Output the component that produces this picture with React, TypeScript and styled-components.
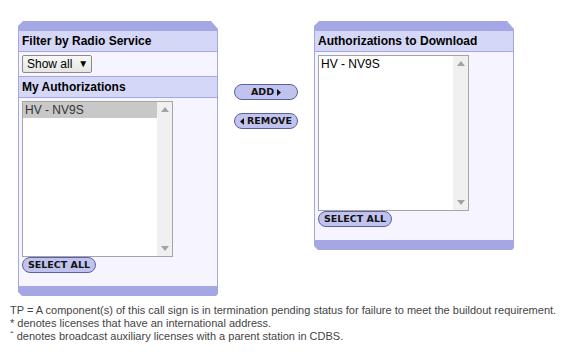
import React from "react";
import styled, { createGlobalStyle } from "styled-components";

const Global = createGlobalStyle`
  html, body { margin: 0; padding: 0; background: #ffffff; }
  body { font-family: "Liberation Sans", Arial, sans-serif; color: #000; }
`;

const BAR = "#a4a7e4";
const HEAD = "#d5d7f6";
const BODY = "#f5f4ff";

const Page = styled.div`
  width: 566px;
  height: 355px;
  padding: 21px 0 0 10px;
  box-sizing: border-box;
`;

const Row = styled.div`
  display: flex;
  align-items: flex-start;
  margin-left: 8px;
`;

const Panel = styled.div`
  width: 200px;
  display: flex;
  flex-direction: column;
`;

const TopBar = styled.div`
  height: 10px;
  background: ${BAR};
  clip-path: polygon(5px 0, calc(100% - 7px) 0, 100% 8px, 100% 100%, 0 100%, 0 5px);
`;

const BottomBar = styled.div`
  height: 10px;
  background: ${BAR};
  clip-path: polygon(0 0, 100% 0, 100% calc(100% - 2px), calc(100% - 2px) 100%, 4px 100%, 0 calc(100% - 4px));
`;

const Body = styled.div`
  background: ${BODY};
  border-left: 1px solid ${BAR};
  border-right: 1px solid ${BAR};
  display: flex;
  flex-direction: column;
`;

const Header = styled.div`
  height: 20px;
  line-height: 20px;
  background: ${HEAD};
  border-bottom: 1px solid ${BAR};
  padding: 0 3px;
  font-size: 12px;
  font-weight: bold;
  color: #000;
`;

const SelectRow = styled.div`
  padding: 3px 3px;
  border-bottom: 1px solid ${BAR};
  display: flex;
`;

const SelectBox = styled.div`
  height: 18px;
  box-sizing: border-box;
  width: 70px;
  border: 1px solid #8a8a8a;
  border-radius: 2px;
  background: linear-gradient(#f8f8f8, #e6e6e6);
  font-size: 12px;
  line-height: 16px;
  padding-left: 4px;
  display: flex;
  align-items: center;
  gap: 6px;
  color: #000;
`;

const Caret = styled.span`
  font-size: 10px;
  line-height: 16px;
`;

const Section = styled.div`
  padding: 3px 3px 13px;
  display: flex;
  flex-direction: column;
  align-items: flex-start;
`;

const ListBox = styled.div`
  width: 151px;
  height: 156px;
  box-sizing: border-box;
  border: 1px solid #a5a5a5;
  background: #ffffff;
  display: flex;
`;

const Items = styled.div`
  flex: 1;
  display: flex;
  flex-direction: column;
`;

const Item = styled.div<{ $selected?: boolean }>`
  height: 16px;
  line-height: 16px;
  padding-left: 2px;
  font-size: 12px;
  color: ${(p) => (p.$selected ? "#333" : "#000")};
  background: ${(p) => (p.$selected ? "#c8c8c8" : "transparent")};
`;

const ScrollTrack = styled.div`
  width: 15px;
  background: #f0f0f0;
  display: flex;
  flex-direction: column;
  justify-content: space-between;
  align-items: center;
  padding: 5px 0;
`;

const Arrow = styled.svg`
  display: block;
`;

const Pill = styled.button<{ $w: number }>`
  width: ${(p) => p.$w}px;
  height: 16px;
  box-sizing: border-box;
  border: 1px solid #5d60a0;
  border-radius: 8px;
  background: #c1c3ef;
  font-family: "DejaVu Sans", Verdana, sans-serif;
  font-weight: bold;
  font-size: 9.5px;
  color: #111;
  padding: 0;
  display: flex;
  align-items: center;
  justify-content: center;
  gap: 3px;
  line-height: 1;
`;

const Middle = styled.div`
  width: 96px;
  padding-top: 63px;
  display: flex;
  flex-direction: column;
  align-items: center;
  gap: 13px;
`;

const Notes = styled.div`
  margin-top: 8px;
  font-size: 11px;
  line-height: 13px;
  color: #444;
`;

const Tri = ({ dir }: { dir: "l" | "r" }) => (
  <svg width="4" height="7" viewBox="0 0 4 7">
    {dir === "r" ? <polygon points="0,0 4,3.5 0,7" fill="#111" /> : <polygon points="4,0 0,3.5 4,7" fill="#111" />}
  </svg>
);

const List = ({ selected }: { selected?: boolean }) => (
  <ListBox>
    <Items>
      <Item $selected={selected}>HV - NV9S</Item>
    </Items>
    <ScrollTrack>
      <Arrow width="8" height="5" viewBox="0 0 8 5">
        <polygon points="0,5 4,0 8,5" fill="#a3a3a3" />
      </Arrow>
      <Arrow width="8" height="5" viewBox="0 0 8 5">
        <polygon points="0,0 8,0 4,5" fill="#a3a3a3" />
      </Arrow>
    </ScrollTrack>
  </ListBox>
);

export default function App() {
  return (
    <Page>
      <Global />
      <Row>
        <Panel>
          <TopBar />
          <Body>
            <Header>Filter by Radio Service</Header>
            <SelectRow>
              <SelectBox>
                Show all <Caret>▼</Caret>
              </SelectBox>
            </SelectRow>
            <Header>My Authorizations</Header>
            <Section>
              <List selected />
              <Pill $w={74}>SELECT ALL</Pill>
            </Section>
          </Body>
          <BottomBar />
        </Panel>
        <Middle>
          <Pill $w={64}>
            ADD <Tri dir="r" />
          </Pill>
          <Pill $w={64}>
            <Tri dir="l" /> REMOVE
          </Pill>
        </Middle>
        <Panel>
          <TopBar />
          <Body>
            <Header>Authorizations to Download</Header>
            <Section>
              <List />
              <Pill $w={74}>SELECT ALL</Pill>
            </Section>
          </Body>
          <BottomBar />
        </Panel>
      </Row>
      <Notes>
        <div>TP = A component(s) of this call sign is in termination pending status for failure to meet the buildout requirement.</div>
        <div>* denotes licenses that have an international address.</div>
        <div>ˆ denotes broadcast auxiliary licenses with a parent station in CDBS.</div>
      </Notes>
    </Page>
  );
}
